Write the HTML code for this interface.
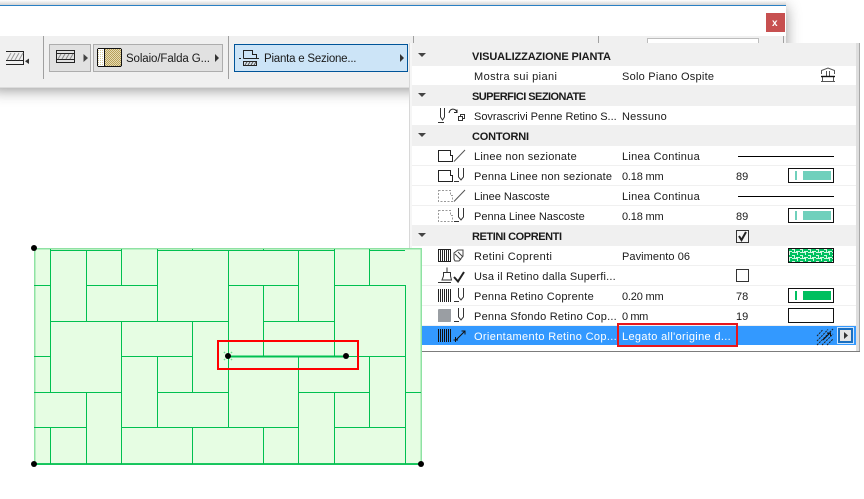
<!DOCTYPE html>
<html><head><meta charset="utf-8"><style>
html,body{margin:0;padding:0;background:#fff;width:864px;height:499px;overflow:hidden}
#win{position:absolute;left:-10px;top:5px;width:796px;height:83px;background:#fff;box-shadow:0 2px 14px rgba(0,0,0,.42)}
#top{position:absolute;left:0;top:0;width:786px;height:5px;background:linear-gradient(#fff,#d4d4d4)}
svg{position:absolute;left:0;top:0}
text{font-family:"Liberation Sans",sans-serif;font-size:11px;fill:#1a1a1a}
.b{font-weight:bold}
.w{fill:#fff}
</style></head><body>
<div id="win"></div><div id="top"></div>
<svg width="864" height="499" viewBox="0 0 864 499" shape-rendering="crispEdges">
<defs>
<pattern id="tan" width="2" height="2" patternUnits="userSpaceOnUse"><rect width="2" height="2" fill="#e6dcb4"/><rect width="1" height="1" fill="#b89f58"/><rect x="1" y="1" width="1" height="1" fill="#b89f58"/></pattern>
<pattern id="pale" width="2" height="2" patternUnits="userSpaceOnUse"><rect width="2" height="2" fill="#fff"/><rect width="1" height="1" fill="#d8cc9c"/></pattern>
<pattern id="ret" width="8" height="6" patternUnits="userSpaceOnUse"><rect width="8" height="6" fill="#00c060"/><path d="M0 .5H6M5.500 0V3M0 3.500H3M2.500 3V6M4 5.500H8" stroke="#d4f7e0" fill="none"/></pattern>
</defs>
<!-- window -->
<rect x="0" y="5" width="786" height="1" fill="#2a80c4"/>
<rect x="0" y="36" width="786" height="52" fill="#f0f0f0"/>
<rect x="0" y="87" width="786" height="1" fill="#dcdcdc"/>
<rect x="766" y="13" width="19" height="19" fill="#c75050"/>
<text x="772" y="26" class="b w" style="font-size:10px">x</text>
<g fill="#a0a0a0"><rect x="43" y="36" width="1" height="43"/><rect x="228" y="36" width="1" height="43"/><rect x="413" y="36" width="1" height="8"/><rect x="598" y="36" width="1" height="8"/><rect x="783" y="36" width="1" height="8"/></g>
<rect x="647.500" y="38.500" width="111" height="8" fill="#fff" stroke="#bdbdbd"/>
<!-- toolbar icon 1 -->
<g shape-rendering="auto">
<path d="M6 51.500H24M6 60.500H24M6 64.500H24M23.500 51V65" stroke="#222" fill="none"/>
<path d="M7 60L11 53M11 60L15 53M15 60L19 53M19 60L23 53" stroke="#999" fill="none"/>
<path d="M29 58.500V64L25 61.200Z" fill="#333"/>
</g>
<!-- btn 1 -->
<rect x="49.500" y="44.500" width="41" height="27" fill="#e1e1e1" stroke="#adadad"/>
<g shape-rendering="auto">
<path d="M56.500 50.500V62.500H74.500V50.500ZM56 53.500H75M56 59.500H75" stroke="#222" fill="none"/>
<path d="M58 59L61 54M62 59L65 54M66 59L69 54M70 59L73 54" stroke="#888" fill="none"/>
<path d="M83.500 54V62L88 58Z" fill="#444"/>
</g>
<!-- btn 2 -->
<rect x="93.500" y="44.500" width="129" height="27" fill="#e1e1e1" stroke="#adadad"/>
<rect x="97.500" y="48.500" width="24" height="18" rx="1.500" fill="url(#tan)" stroke="#111"/>
<rect x="98" y="49" width="6" height="17" fill="url(#pale)"/>
<rect x="104" y="49" width="1" height="17" fill="#111"/>
<text x="126" y="62" textLength="84" style="font-size:11.500px">Solaio/Falda G...</text>
<path d="M215 54V62L219 58Z" fill="#333" shape-rendering="auto"/>
<!-- btn 3 -->
<rect x="234.500" y="44.500" width="173" height="27" fill="#cce4f7" stroke="#005499"/>
<g shape-rendering="auto">
<path d="M239 58.500H241M243.500 58.500V50.500H252.500V54.500H256.500V58.500H243.500M256 58.500H259" stroke="#222" fill="none"/>
<path d="M243.500 61.500H256.500V65.500H243.500Z" stroke="#222" fill="#d8e4ee"/>
<path d="M245 65L247 62M248 65L250 62M251 65L253 62M254 65L256 62" stroke="#555" fill="none"/>
<path d="M400 54V62L404 58Z" fill="#333"/>
</g>
<text x="264" y="62" textLength="92.500" style="font-size:11.500px">Pianta e Sezione...</text>
<!-- panel -->
<rect x="409" y="43" width="451" height="308" fill="#f0f0f0"/>
<rect x="409" y="43" width="1" height="308" fill="#d8d8d8"/>
<rect x="410" y="43" width="2" height="308" fill="#f6f6f6"/>
<rect x="856" y="43" width="3" height="308" fill="#dedede"/>
<rect x="859" y="43" width="1" height="308" fill="#a8a8a8"/>
<rect x="409" y="351" width="451" height="1" fill="#7c7c7c"/>
<rect x="412" y="345" width="444" height="6" fill="#fff"/>
<g fill="#fff">
<rect x="412" y="66" width="444" height="19"/><rect x="412" y="106" width="444" height="19"/>
<rect x="412" y="146" width="444" height="19"/><rect x="412" y="166" width="444" height="19"/><rect x="412" y="186" width="444" height="19"/><rect x="412" y="206" width="444" height="19"/>
<rect x="412" y="246" width="444" height="19"/><rect x="412" y="266" width="444" height="19"/><rect x="412" y="286" width="444" height="19"/><rect x="412" y="306" width="444" height="19"/>
</g>
<rect x="412" y="326" width="444" height="19" fill="#3399ff"/>
<g fill="#444" shape-rendering="auto">
<path d="M418 53H426L422 57Z"/><path d="M418 93H426L422 97Z"/><path d="M418 133H426L422 137Z"/><path d="M418 233H426L422 237Z"/>
</g>
<text x="472" y="60" class="b" textLength="139">VISUALIZZAZIONE PIANTA</text>
<text x="472" y="100" class="b" textLength="114">SUPERFICI SEZIONATE</text>
<text x="472" y="140" class="b" textLength="57">CONTORNI</text>
<text x="472" y="240" class="b" textLength="90">RETINI COPRENTI</text>
<text x="474" y="80" textLength="83">Mostra sui piani</text><text x="622" y="80" textLength="92">Solo Piano Ospite</text>
<text x="474" y="120" textLength="142.700">Sovrascrivi Penne Retino S...</text><text x="622" y="120" textLength="44.700">Nessuno</text>
<text x="474" y="160" textLength="102.700">Linee non sezionate</text><text x="622" y="160" textLength="77.700">Linea Continua</text>
<text x="474" y="180" textLength="138">Penna Linee non sezionate</text><text x="622" y="180" textLength="41.700">0.18 mm</text><text x="736" y="180">89</text>
<text x="474" y="200" textLength="75.700">Linee Nascoste</text><text x="622" y="200" textLength="77.700">Linea Continua</text>
<text x="474" y="220" textLength="110.700">Penna Linee Nascoste</text><text x="622" y="220" textLength="41.700">0.18 mm</text><text x="736" y="220">89</text>
<text x="474" y="260" textLength="78">Retini Coprenti</text><text x="622" y="260" textLength="68">Pavimento 06</text>
<text x="474" y="280" textLength="141.700">Usa il Retino dalla Superfi...</text>
<text x="474" y="300" textLength="119.700">Penna Retino Coprente</text><text x="622" y="300" textLength="41.700">0.20 mm</text><text x="736" y="300">78</text>
<text x="474" y="320" textLength="142.700">Penna Sfondo Retino Cop...</text><text x="622" y="320" textLength="26.300">0 mm</text><text x="736" y="320">19</text>
<text x="474" y="340" textLength="142.700" style="fill:#fff">Orientamento Retino Cop...</text>
<text x="622" y="340" textLength="108.700" style="fill:#fff">Legato all'origine d...</text>
<!-- lines & swatches -->
<rect x="738" y="156" width="96" height="1" fill="#000"/><rect x="738" y="196" width="96" height="1" fill="#000"/>
<g fill="#fff" stroke="#111">
<rect x="788.500" y="168.500" width="45" height="14"/><rect x="788.500" y="208.500" width="45" height="14"/>
<rect x="788.500" y="288.500" width="45" height="14"/><rect x="788.500" y="308.500" width="45" height="14"/>
</g>
<g fill="#70d0bc"><rect x="795" y="171" width="2" height="9"/><rect x="803" y="171" width="28" height="9"/><rect x="795" y="211" width="2" height="9"/><rect x="803" y="211" width="28" height="9"/></g>
<g fill="#00bf5f"><rect x="795" y="291" width="2" height="9"/><rect x="803" y="291" width="28" height="9"/></g>
<rect x="788.500" y="248.500" width="45" height="14" fill="url(#ret)" stroke="#111"/>
<!-- checkboxes -->
<rect x="736.500" y="230.500" width="12" height="12" fill="#f4f4f4" stroke="#333"/>
<path d="M739 236L741.500 240L746 232" stroke="#222" stroke-width="2" fill="none" shape-rendering="auto"/>
<rect x="736.500" y="269.500" width="12" height="12" fill="#fff" stroke="#333"/>
<!-- building icon -->
<g shape-rendering="auto" fill="none" stroke="#555"><path d="M821.500 74V70.500L828 68L834.500 70.500V74M821 81.500H835M826.500 71V76M829.500 71V76M822.500 77V81M833.500 77V81"/><path d="M821 76.500H835" stroke="#111" stroke-width="1.400"/></g>
<!-- left icons -->
<g shape-rendering="auto" fill="none" stroke="#333">
<path d="M440.500 108V117L442.500 120L444.500 117V108M438 122.500H444"/>
<path d="M449 113C450 108 455 108 457 112M457 109.500V112.500H454" stroke="#222"/>
<rect x="458.500" y="116.500" width="4" height="4"/><path d="M460.500 116.500V114.500H464.500V118.500H462.500"/>
<path d="M438.500 150.500H450.500V155.500H452.500V161.500H438.500Z" stroke="#222"/><path d="M454 161.500L465 150" stroke="#555"/>
<path d="M438.500 170.500H450.500V175.500H452.500V181.500H438.500Z" stroke="#222"/>
<path d="M458.500 168V177L461 180L463.500 177V168M454 181.500H459" stroke="#333"/>
<path d="M438.500 190.500H450.500V195.500H452.500V201.500H438.500Z" stroke="#999" stroke-dasharray="2 1.500"/><path d="M454 201.500L465 190" stroke="#555"/>
<path d="M438.500 210.500H450.500V215.500H452.500V221.500H438.500Z" stroke="#999" stroke-dasharray="2 1.500"/>
<path d="M458.500 208V217L461 220L463.500 217V208M454 221.500H459" stroke="#333"/>
<rect x="438.500" y="249.500" width="12" height="12" stroke="#222"/>
<path d="M440.500 250V261M442.500 250V261M444.500 250V261M446.500 250V261M448.500 250V261" stroke="#222"/>
<path d="M454 259V253L458 250H463V256L459 261H455ZM455 254L461 260M458 252L463 257" stroke="#444"/>
<path d="M447 267.500V272M443.500 272.500H450.500V276L451.500 280H442L443.500 276ZM438 282.500H451" stroke="#333"/>
<path d="M454 277L458 281.500L464 272" stroke="#222" stroke-width="2"/>
<path d="M438.500 289V302M440.500 289V302M442.500 289V302M444.500 289V302M446.500 289V302M448.500 289V302M450.500 289V302" stroke="#222"/>
<path d="M458.500 288V297L461 300L463.500 297V288M454 301.500H459" stroke="#333"/>
<path d="M458.500 308V317L461 320L463.500 317V308M454 321.500H459" stroke="#333"/>
<path d="M438.500 329V342M440.500 329V342M442.500 329V342M444.500 329V342M446.500 329V342M448.500 329V342M450.500 329V342" stroke="#111"/>
<path d="M456 340L465 331M461.500 331H465V334.500M455.500 337V342M453.500 340H458" stroke="#111"/>
</g>
<rect x="438" y="309" width="13" height="13" rx="1" fill="#9a9ea3"/>
<!-- selected right icons -->
<g shape-rendering="auto" fill="none" stroke="#222" stroke-dasharray="2 1">
<path d="M817 336L823 329.500M817 341L828 329.500M817 345L833 329M822 345L833 334M827 345L833 339"/>
</g>
<path d="M823 340L830 333M827 333H830.500V336.500" fill="none" stroke="#111" shape-rendering="auto"/>
<rect x="837.500" y="327.500" width="16" height="16" fill="#1a6fc0" stroke="#cfe6ff"/>
<rect x="840" y="330" width="11" height="11" fill="#e4e4e4"/>
<path d="M844 332V339L848 335.500Z" fill="#333" shape-rendering="auto"/>
<!-- drawing -->
<rect x="34.500" y="248.500" width="386.500" height="215.500" fill="#e6fde3" stroke="#8fe2a3" stroke-width="1.500"/>
<path fill="none" stroke="#00c050" stroke-width="1" d="
M50.500 249V392M50.500 427V464
M86.500 250V321M86.500 392V464
M121.500 249V285M121.500 321V464
M157.500 249V321M157.500 356V427
M192.500 321V392M192.500 427V464M192.500 249V250
M228.500 250V427
M263.500 285V356M263.500 427V464M263.500 249V250
M298.500 250V321M298.500 356V464
M334.500 249V356M334.500 392V464
M369.500 249V285M369.500 356V427
M405.500 285V464
M34 285.500H50M86 285.500H157M228 285.500H298M334 285.500H405
M50 321.500H228M263 321.500H334
M34 356.500H50M121 356.500H192M334 356.500H405
M34 392.500H121M157 392.500H228M298 392.500H369M405 392.500H421
M34 427.500H86M121 427.500H298M334 427.500H405
M50 250.500H121M157 250.500H334M369 250.500H405"/>
<rect x="34" y="463" width="387" height="2" fill="#00c050" opacity=".85"/>
<rect x="228" y="355.500" width="118" height="2" fill="#00c050"/>
<rect x="218" y="341" width="140" height="28" fill="none" stroke="#ff0000" stroke-width="2"/>
<rect x="618" y="324" width="119" height="22" fill="none" stroke="#e8161c" stroke-width="2"/>
<g fill="#000" shape-rendering="auto"><circle cx="34" cy="248" r="3"/><circle cx="34" cy="464" r="3"/><circle cx="421" cy="464" r="3"/><circle cx="228" cy="356" r="3"/><circle cx="346" cy="356" r="3"/></g>
<path d="M225 353l-1-1M231 353l1-1M225 359l-1 1M231 359l1 1" stroke="#6fdc8e" stroke-width="1.500" shape-rendering="auto"/>
</svg>
</body></html>
